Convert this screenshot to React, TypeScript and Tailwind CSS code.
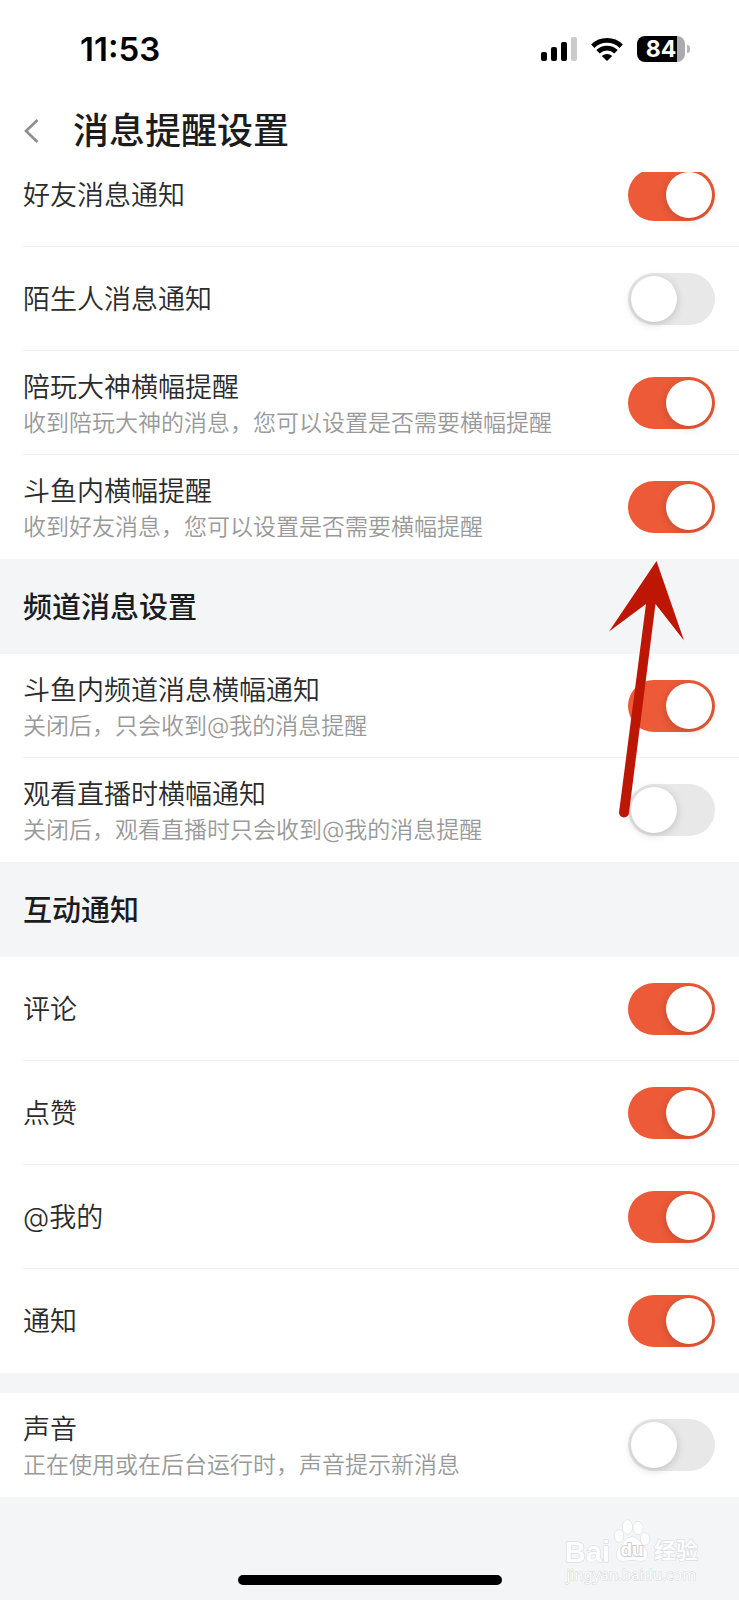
import React, { useState } from 'react';

interface SettingItem {
    id: string;
    title: string;
    hint?: string;
    on: boolean;
}

interface SettingGroup {
    heading?: string;
    items: SettingItem[];
}

const groups: SettingGroup[] = [
    {
        items: [
            { id: 'friend', title: '好友消息通知', on: true },
            { id: 'stranger', title: '陌生人消息通知', on: false },
            { id: 'playmate', title: '陪玩大神横幅提醒', hint: '收到陪玩大神的消息，您可以设置是否需要横幅提醒', on: true },
            { id: 'inapp', title: '斗鱼内横幅提醒', hint: '收到好友消息，您可以设置是否需要横幅提醒', on: true },
        ],
    },
    {
        heading: '频道消息设置',
        items: [
            { id: 'channel', title: '斗鱼内频道消息横幅通知', hint: '关闭后，只会收到@我的消息提醒', on: true },
            { id: 'live', title: '观看直播时横幅通知', hint: '关闭后，观看直播时只会收到@我的消息提醒', on: false },
        ],
    },
    {
        heading: '互动通知',
        items: [
            { id: 'comment', title: '评论', on: true },
            { id: 'like', title: '点赞', on: true },
            { id: 'mention', title: '@我的', on: true },
            { id: 'notice', title: '通知', on: true },
        ],
    },
    {
        items: [
            { id: 'sound', title: '声音', hint: '正在使用或在后台运行时，声音提示新消息', on: false },
        ],
    },
];

const StatusBar: React.FC = () => (
    <div className="flex h-[98px] items-center justify-between pl-20 pr-[49px] text-black">
        <span className="font-['Inter',sans-serif] text-[33px] font-semibold leading-10">11:53</span>
        <div className="flex items-center gap-[14px]">
            <svg className="h-6 w-9" viewBox="0 0 36 24" aria-hidden="true">
                <rect x="0" y="15" width="6" height="9" rx="2" />
                <rect x="10" y="10" width="6" height="14" rx="2" />
                <rect x="20" y="5" width="6" height="19" rx="2" />
                <rect x="30" y="0" width="6" height="24" rx="2" fill="#cbcbcb" />
            </svg>
            <svg className="h-6 w-8" viewBox="0 0 32 24" aria-hidden="true">
                <g fill="none" stroke="#000" strokeWidth="4.8">
                    <path d="M1.800 9.200a20.400 20.400 0 0 1 28.400 0" />
                    <path d="M7 14.800a12.800 12.800 0 0 1 18 0" />
                </g>
                <path d="M10.800 19a7.600 7.600 0 0 1 10.400 0L16 24z" />
            </svg>
            <div className="flex items-center gap-[2px]">
                <div className="flex h-[26px] w-12 items-center justify-center rounded-lg bg-linear-to-r from-black from-84% to-[#ababab] to-84%">
                    <span className="font-['Inter',sans-serif] text-[23px] font-bold leading-6 text-white">84</span>
                </div>
                <div className="h-2 w-[3px] rounded-r-full bg-[#b5b5b5]" />
            </div>
        </div>
    </div>
);

const SettingRow: React.FC<{ item: SettingItem; checked: boolean; last: boolean; onToggle: () => void }> = ({ item, checked, last, onToggle }) => (
    <li className="bg-white pl-[23px]">
        <div className={`flex h-[104px] items-center justify-between border-b pr-6 ${last ? 'border-transparent' : 'border-[#f0f0f0]'}`}>
            <label htmlFor={item.id} className="flex flex-col pt-[2px]">
                <span className="text-[27px] font-[350] leading-10 text-[#2b2b2b]">{item.title}</span>
                {item.hint && <span className="pb-[2px] text-[23px] font-[350] leading-[30px] text-[#999]">{item.hint}</span>}
            </label>
            <input
                id={item.id}
                type="checkbox"
                role="switch"
                checked={checked}
                onChange={onToggle}
                className="flex h-[52px] w-[87px] shrink-0 appearance-none items-center rounded-full bg-[#e8e8e8] px-[3px] before:size-[46px] before:rounded-full before:bg-white before:shadow-[0_2px_8px_rgba(0,0,0,0.18)] checked:justify-end checked:bg-[#ec5a38]"
            />
        </div>
    </li>
);

const PointerArrow: React.FC = () => (
    <svg className="pointer-events-none absolute right-[54px] top-[561px] h-[258px] w-[76px]" viewBox="0 0 76 258" fill="#bd1605" aria-hidden="true">
        <path d="M47.500 0L75 79.500 46.500 43 20 251.500A5 5 0 0 1 10 251.500L37 43 0 70.500z" />
    </svg>
);

const Watermark: React.FC = () => (
    <div className="pointer-events-none absolute right-[41px] top-[1519px] flex flex-col items-center text-[#fdfdfd] [-webkit-text-stroke:1px_#d4d5d7] [paint-order:stroke]">
        <div className="flex items-end gap-1">
            <span className="font-['Liberation_Sans',sans-serif] text-[29px] font-bold leading-6">Bai</span>
            <div className="relative flex h-[45px] w-9 items-end justify-center pb-1">
                <svg className="absolute inset-0 h-[45px] w-9" viewBox="0 0 36 45" fill="#fdfdfd" stroke="#d9dadc" aria-hidden="true">
                    <ellipse cx="5" cy="17" rx="4.500" ry="6" />
                    <ellipse cx="13.500" cy="8" rx="4.800" ry="7" />
                    <ellipse cx="24" cy="9" rx="4.800" ry="6.500" />
                    <ellipse cx="31" cy="20" rx="4.500" ry="6" />
                    <path d="M18 18c6 0 8 6 12 10 6 6 4 14-3 14-4 0-5-1-9-1s-5 1-9 1c-7 0-9-8-3-14 4-4 6-10 12-10z" />
                </svg>
                <span className="relative font-['Liberation_Sans',sans-serif] text-[19px] font-bold leading-5 [-webkit-text-stroke:2px_#cfd0d2]">du</span>
            </div>
            <span className="text-[22px] font-bold leading-7">经验</span>
        </div>
        <span className="font-['Noto_Sans',sans-serif] text-[15px] leading-5">jingyan.baidu.com</span>
    </div>
);

export default function App() {
    const [enabled, setEnabled] = useState<Record<string, boolean>>(() =>
        Object.fromEntries(groups.flatMap(g => g.items).map(i => [i.id, i.on]))
    );

    const toggle = (id: string) => setEnabled(prev => ({ ...prev, [id]: !prev[id] }));

    return (
        <div className="relative flex min-h-screen flex-col bg-[#f4f5f7] font-['Inter','Noto_Sans_CJK_SC',sans-serif]">
            <header className="bg-white">
                <StatusBar />
                <div className="flex h-[74px] items-start gap-[33px] pl-6">
                    <button type="button" aria-label="返回" className="flex h-[66px] w-4 items-center">
                        <svg className="h-6 w-4" viewBox="0 0 16 24" fill="none" stroke="#8e8e8e" strokeWidth="2.6">
                            <path d="M13.500 1L2 12l11.500 11" />
                        </svg>
                    </button>
                    <h1 className="text-[36px] font-medium leading-[66px] text-[#1c1c1c]">消息提醒设置</h1>
                </div>
            </header>

            <main className="overflow-hidden">
                {/* list is scrolled a little way under the header */}
                <div className="-mt-[29px]">
                    {groups.map((group, gi) => (
                        <section key={gi}>
                            {group.heading && (
                                <h2 className="pl-[23px] pt-[2px] text-[29px] font-medium leading-[93px] text-[#1b1c1e]">{group.heading}</h2>
                            )}
                            {!group.heading && gi > 0 && <div className="h-5" />}
                            <ul>
                                {group.items.map((item, i) => (
                                    <SettingRow
                                        key={item.id}
                                        item={item}
                                        checked={enabled[item.id]}
                                        last={i === group.items.length - 1}
                                        onToggle={() => toggle(item.id)}
                                    />
                                ))}
                            </ul>
                        </section>
                    ))}
                </div>
            </main>

            <footer className="flex flex-1 items-end justify-center pb-[15px]">
                <div className="h-[10px] w-[264px] rounded-full bg-black" />
            </footer>

            <PointerArrow />
            <Watermark />
        </div>
    );
}
